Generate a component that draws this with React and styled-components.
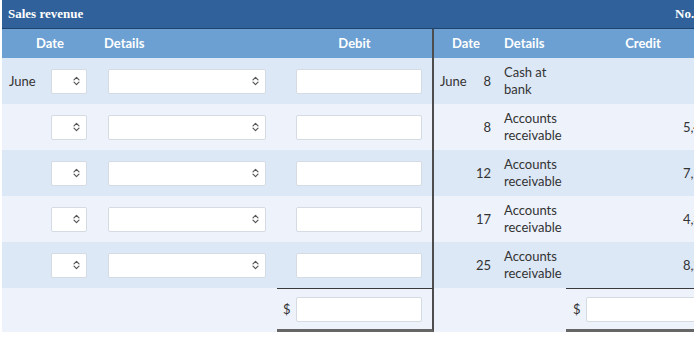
import React from "react";
import styled, { createGlobalStyle } from "styled-components";

const Global = createGlobalStyle`
  html, body { margin: 0; padding: 0; background: #fff; }
  body { font-family: Lato, "Open Sans", sans-serif; }
`;

const Viewport = styled.div`
  width: 692px;
  margin-left: 2px;
  overflow: hidden;
`;

const Sheet = styled.div`
  width: 718px;
`;

const TitleBar = styled.div`
  height: 28px;
  background: #30619a;
  border-bottom: 1px solid #1f436d;
  display: flex;
  align-items: center;
  justify-content: space-between;
  padding: 0 3px 0 6px;
  font-family: "Liberation Serif", serif;
  font-weight: bold;
  font-size: 13px;
  color: #fff;
`;

const Row = styled.div`
  display: grid;
  grid-template-columns: 96px 179px 157px 64px 68px 154px;
  height: ${(p) => p.$h}px;
  background: ${(p) => p.$bg};
  color: ${(p) => (p.$head ? "#fff" : "#333")};
  font-weight: ${(p) => (p.$head ? 700 : 400)};
  font-size: 13px;
`;

const Cell = styled.div`
  display: flex;
  align-items: center;
  justify-content: ${(p) => p.$justify || "flex-start"};
  padding: ${(p) => p.$pad || "0"};
  box-sizing: border-box;
  border-right: ${(p) => (p.$divider ? "2px solid #4d4d4d" : "none")};
  border-top: ${(p) => (p.$top ? "1px solid #3a3a3a" : "none")};
  border-bottom: ${(p) => (p.$bottom ? "3px solid #666" : "none")};
  background: ${(p) => p.$bg || "transparent"};
  line-height: 17px;
`;

const MonthLabel = styled.span`
  width: 42px;
  flex: none;
`;

const SelectBox = styled.div`
  width: ${(p) => p.$w}px;
  height: 25px;
  box-sizing: border-box;
  background: #fff;
  border: 1px solid #d5dbe3;
  border-radius: 2px;
  display: flex;
  align-items: center;
  justify-content: flex-end;
  padding-right: 6px;
  margin-left: ${(p) => p.$ml || 0}px;
`;

const InputBox = styled.div`
  width: ${(p) => p.$w}px;
  height: 25px;
  box-sizing: border-box;
  background: #fff;
  border: 1px solid #d5dbe3;
  border-radius: 2px;
  margin-left: ${(p) => p.$ml || 0}px;
`;

const Dollar = styled.span`
  width: 13px;
  flex: none;
  color: #333;
`;

const DayNum = styled.span`
  margin-left: auto;
`;

const Chevrons = () => (
  <svg width="7" height="10" viewBox="0 0 7 10" fill="none" stroke="#555" strokeWidth="1.2" strokeLinecap="round" strokeLinejoin="round">
    <path d="M1 3.8 L3.5 1.3 L6 3.8" />
    <path d="M1 6.2 L3.5 8.7 L6 6.2" />
  </svg>
);

const rows = [
  { month: "June", rMonth: "June", day: "8", detail: ["Cash at", "bank"], credit: "" },
  { month: "", rMonth: "", day: "8", detail: ["Accounts", "receivable"], credit: "5,400" },
  { month: "", rMonth: "", day: "12", detail: ["Accounts", "receivable"], credit: "7,150" },
  { month: "", rMonth: "", day: "17", detail: ["Accounts", "receivable"], credit: "4,300" },
  { month: "", rMonth: "", day: "25", detail: ["Accounts", "receivable"], credit: "8,250" },
];

const DARK = "#dde8f6";
const LIGHT = "#edf2fb";

export default function App() {
  return (
    <>
      <Global />
      <Viewport>
        <Sheet>
          <TitleBar>
            <span>Sales revenue</span>
            <span>No. 400</span>
          </TitleBar>
          <Row $h={29} $bg="#6c9fd2" $head>
            <Cell $justify="center">Date</Cell>
            <Cell $pad="0 0 0 6px">Details</Cell>
            <Cell $justify="center" $divider>Debit</Cell>
            <Cell $justify="center">Date</Cell>
            <Cell $pad="0 0 0 6px">Details</Cell>
            <Cell $justify="center">Credit</Cell>
          </Row>
          {rows.map((r, i) => (
            <Row key={i} $h={46} $bg={i % 2 === 0 ? DARK : LIGHT}>
              <Cell $pad="0 0 0 7px">
                <MonthLabel>{r.month}</MonthLabel>
                <SelectBox $w={36}><Chevrons /></SelectBox>
              </Cell>
              <Cell>
                <SelectBox $w={158} $ml={10}><Chevrons /></SelectBox>
              </Cell>
              <Cell $divider>
                <InputBox $w={126} $ml={19} />
              </Cell>
              <Cell $pad="0 7px 0 6px">
                <span>{r.rMonth}</span>
                <DayNum>{r.day}</DayNum>
              </Cell>
              <Cell $pad="0 0 0 6px">
                <span>
                  {r.detail[0]}
                  <br />
                  {r.detail[1]}
                </span>
              </Cell>
              <Cell $justify="flex-end" $pad="0 4px 0 0">{r.credit}</Cell>
            </Row>
          ))}
          <Row $h={44} $bg={LIGHT}>
            <Cell />
            <Cell />
            <Cell $divider $top $bottom $pad="0 0 0 6px">
              <Dollar>$</Dollar>
              <InputBox $w={126} />
            </Cell>
            <Cell />
            <Cell />
            <Cell $top $bottom $pad="0 0 0 7px">
              <Dollar>$</Dollar>
              <InputBox $w={130} />
            </Cell>
          </Row>
        </Sheet>
      </Viewport>
    </>
  );
}
